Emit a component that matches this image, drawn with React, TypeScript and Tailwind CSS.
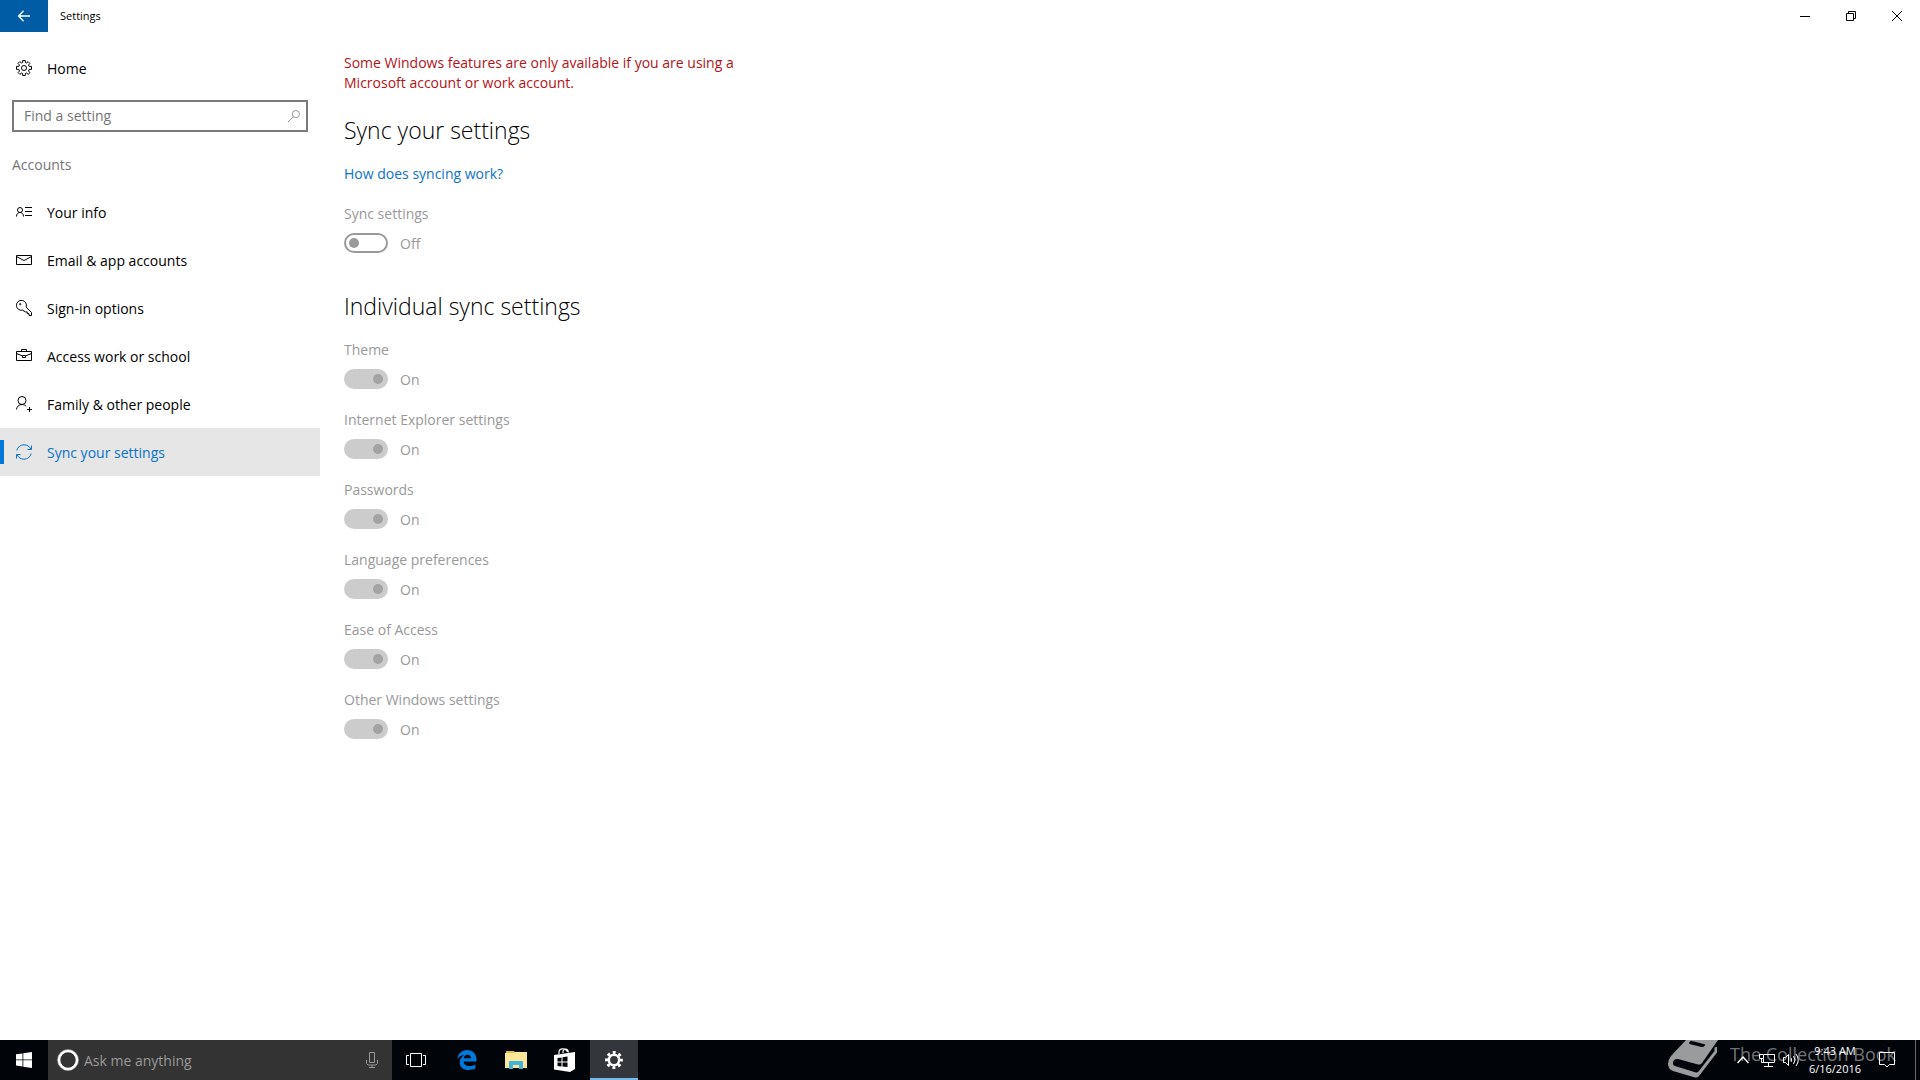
import React, { useState } from "react";

interface NavItem {
    label: string;
    icon: React.ReactNode;
}

interface SyncOption {
    id: string;
    label: string;
    checked: boolean;
}

interface IconProps {
    children: React.ReactNode;
    className?: string;
}

const Icon: React.FC<IconProps> = ({ children, className = "size-4" }) => (
    <svg
        viewBox="0 0 16 16"
        fill="none"
        stroke="currentColor"
        strokeWidth="1"
        className={`${className} shrink-0`}
        aria-hidden="true"
    >
        {children}
    </svg>
);

// outline gear with eight teeth
const GearOutline = () => (
    <Icon>
        <path d="M6.700.5h2.600v2l1.300.5 1.500-1.400 1.800 1.800L12.500 5l.6 1.400h2.400v3h-2.400L12.500 11l1.500 1.600-1.800 1.800-1.600-1.400-1.300.5v2H6.700v-2L5.400 13l-1.500 1.400-1.800-1.800L3.500 11l-.6-1.600H.5v-3h2.400L3.500 5 2 3.400l1.800-1.800L5.400 3l1.300-.5z" />
        <circle cx="8" cy="8" r="2.500" />
    </Icon>
);

const navItems: NavItem[] = [
    {
        label: "Your info",
        icon: (
            <Icon>
                <circle cx="4" cy="6" r="2.500" />
                <path d="M.5 12.500c0-2.500 1.500-4 3.500-4s3.500 1.500 3.500 4M9 3.500h7M9 7.500h7M9 11.500h7" />
            </Icon>
        ),
    },
    {
        label: "Email & app accounts",
        icon: (
            <Icon>
                <path d="M.5 3.500h15v9H.5zM.5 4.500 8 8.500l7.500-4" />
            </Icon>
        ),
    },
    {
        label: "Sign-in options",
        icon: (
            <Icon>
                <path d="M6.500 10.200a5 5 0 1 1 3.600-3.100l5.400 5.400v3h-2.500v-1.800h-1.800v-1.800H9.500z" />
                <circle cx="4.200" cy="4.200" r=".7" />
            </Icon>
        ),
    },
    {
        label: "Access work or school",
        icon: (
            <Icon>
                <path d="M.5 3.500h15v9H.5zM5.500 3.500v-2h5v2M.5 5.500l6 2.500M9.500 8l6-2.500M6.500 7.500h3v2h-3z" />
            </Icon>
        ),
    },
    {
        label: "Family & other people",
        icon: (
            <Icon>
                <circle cx="6" cy="4.500" r="4" />
                <path d="M.5 13.500C.8 10.500 3 8.500 6 8.500c1.800 0 3.200.7 4.200 1.900M13.500 11v5M11 13.500h5" />
            </Icon>
        ),
    },
    {
        label: "Sync your settings",
        icon: (
            <Icon>
                <path d="M.8 6.500C1.600 3 4.500.8 8 .8c3 0 5.600 1.600 6.800 4.200M15.500 1.500V5.500h-4M15.200 9.500c-.8 3.500-3.700 5.700-7.200 5.700-3 0-5.600-1.600-6.800-4.200M.5 14.500v-4h4" />
            </Icon>
        ),
    },
];

const initialOptions: SyncOption[] = [
    { id: "theme", label: "Theme", checked: true },
    { id: "ie", label: "Internet Explorer settings", checked: true },
    { id: "passwords", label: "Passwords", checked: true },
    { id: "language", label: "Language preferences", checked: true },
    { id: "ease", label: "Ease of Access", checked: true },
    { id: "other", label: "Other Windows settings", checked: true },
];

const Toggle: React.FC<{ option: SyncOption }> = ({ option }) => (
    <div className="flex flex-col text-[#999999]">
        <label htmlFor={option.id} className="leading-5">
            {option.label}
        </label>
        <div className="mt-[9px] flex h-5 items-center gap-3">
            <input
                id={option.id}
                type="checkbox"
                role="switch"
                disabled
                checked={option.checked}
                readOnly
                className="flex h-5 w-11 appearance-none items-center rounded-full border-2 border-[#999999] px-[3px] before:size-[10px] before:rounded-full before:bg-[#999999] checked:justify-end checked:border-[#cccccc] checked:bg-[#cccccc] checked:before:bg-[#a3a3a3]"
            />
            <span>{option.checked ? "On" : "Off"}</span>
        </div>
    </div>
);

const TitleBar = () => (
    <header className="flex h-8 shrink-0 items-stretch">
        <button type="button" aria-label="Back" className="flex w-12 items-center justify-center bg-[#005ca5] text-white">
            <svg viewBox="0 0 12 12" fill="none" stroke="currentColor" className="size-3" aria-hidden="true">
                <path strokeWidth="1.300" d="M0 6h12M5.500.7.700 6l4.800 5.300" />
            </svg>
        </button>
        <h1 className="flex flex-1 items-center pl-3 text-[11px]">Settings</h1>
        <button type="button" aria-label="Minimize" className="flex w-[46px] items-center justify-center">
            <svg viewBox="0 0 10 10" stroke="currentColor" className="size-[10px]" aria-hidden="true">
                <path d="M0 5.500h10" />
            </svg>
        </button>
        <button type="button" aria-label="Restore" className="flex w-[46px] items-center justify-center">
            <svg viewBox="0 0 10 10" fill="none" stroke="currentColor" className="size-[10px]" aria-hidden="true">
                <path d="M.5 2.500h7v7h-7zM2.500 2.500v-2h7v7h-2" />
            </svg>
        </button>
        <button type="button" aria-label="Close" className="flex w-[46px] items-center justify-center">
            <svg viewBox="0 0 10 10" stroke="currentColor" className="size-[10px]" aria-hidden="true">
                <path d="M0 0l10 10M10 0 0 10" />
            </svg>
        </button>
    </header>
);

const Sidebar: React.FC<{ active: string; onSelect: (label: string) => void }> = ({ active, onSelect }) => (
    <aside className="w-80 shrink-0 pt-3">
        <a href="#home" className="flex h-12 items-center gap-[15px] pl-4">
            <GearOutline />
            Home
        </a>
        <div className="mx-3 mt-2 flex h-8 items-center border-2 border-[#7a7a7a] pr-[6px] pb-px pl-[10px]">
            <input
                type="text"
                aria-label="Find a setting"
                placeholder="Find a setting"
                className="min-w-0 flex-1 leading-5 outline-none placeholder:text-[#767676]"
            />
            <Icon className="size-3 text-[#767676]">
                <circle cx="10.500" cy="5.500" r="4.800" />
                <path d="M7 9 0 16" />
            </Icon>
        </div>
        <h2 className="mt-[23px] pl-3 leading-5 text-[#767676]">Accounts</h2>
        <nav className="mt-[13px]">
            {navItems.map((item) => (
                <a
                    key={item.label}
                    href="#settings"
                    onClick={() => onSelect(item.label)}
                    className={
                        item.label === active
                            ? "flex h-12 items-center bg-[#e6e6e6] text-[#0b73c9]"
                            : "flex h-12 items-center"
                    }
                >
                    <span className={item.label === active ? "h-6 w-1 bg-[#0078d7]" : "h-6 w-1"} />
                    <span className="flex items-center gap-[15px] pl-3">
                        {item.icon}
                        {item.label}
                    </span>
                </a>
            ))}
        </nav>
    </aside>
);

const Taskbar = () => (
    <footer className="relative flex h-10 shrink-0 items-stretch overflow-hidden bg-[#010409] text-white">
        <button type="button" aria-label="Start" className="flex w-12 items-center justify-center">
            <svg viewBox="0 0 16 16" fill="currentColor" className="size-4" aria-hidden="true">
                <path d="M0 2.300 6.500 1.400v6.100H0zM7.300 1.300 16 0v7.500H7.300zM0 8.300h6.500v6.200L0 13.600zM7.300 8.300H16V16l-8.700-1.300z" />
            </svg>
        </button>
        <div className="flex w-[344px] items-center bg-[#333333] pr-[14px] pl-[9px]">
            <svg viewBox="0 0 22 22" fill="none" stroke="currentColor" className="size-[22px]" aria-hidden="true">
                <circle cx="11" cy="11" r="9" strokeWidth="2.600" />
                <circle cx="11" cy="11" r="10.500" strokeOpacity=".4" />
            </svg>
            <input
                type="text"
                aria-label="Ask me anything"
                placeholder="Ask me anything"
                className="ml-[5px] min-w-0 flex-1 outline-none placeholder:text-[#999999]"
            />
            <svg viewBox="0 0 12 16" fill="none" stroke="#999999" className="h-4 w-3" aria-hidden="true">
                <path d="M3.500.5h5v10h-5zM.5 8v3.500l1.500 1.500h8l1.500-1.500V8M6 13v2.500M3 15.500h6" />
            </svg>
        </div>
        <button type="button" aria-label="Task view" className="flex w-12 items-center justify-center">
            <svg viewBox="0 0 20 14" fill="none" stroke="currentColor" className="h-[14px] w-5" aria-hidden="true">
                <path d="M4.500.5h11v13h-11zM3 2.500H.5v9H3M17 2.500h2.500v9H17" />
            </svg>
        </button>
        <button type="button" aria-label="Microsoft Edge" className="flex w-[54px] items-center justify-center">
            <svg viewBox="0 0 20 20" fill="#0078d7" className="size-5" aria-hidden="true">
                <path d="M.3 8.900C1 3.600 4.700 0 10 0c6 0 9.500 4 9.500 9.300v2.200H6.600c.2 3 2.600 4.500 5.800 4.500 2.200 0 4.200-.6 6-1.600v4.200c-2 1-4.300 1.400-6.700 1.400C6.300 20 2.700 17 2.700 12.400c0-3.200 1.800-5.900 4.600-7.200C4.500 5 1.900 6.400.3 8.900zM6.700 8.200h7.300c0-2.200-1.200-3.500-3.500-3.500-2 0-3.400 1.400-3.800 3.500z" />
            </svg>
        </button>
        <button type="button" aria-label="File Explorer" className="flex w-11 items-center justify-center">
            <svg viewBox="0 0 22 18" className="h-[18px] w-[22px]" aria-hidden="true">
                <path fill="#e8b93c" d="M1 0h8l2 2H1z" />
                <path fill="#fbe69a" d="M0 2h9l1-1h12v16H0z" />
                <path fill="#43b4d9" d="M4 18v-7q0-1 1-1h12q1 0 1 1v7h-4v-4H8v4z" />
            </svg>
        </button>
        <button type="button" aria-label="Store" className="flex w-[52px] items-center justify-center pl-[2px]">
            <svg viewBox="0 0 22 24" className="h-6 w-[22px]" aria-hidden="true">
                <path fill="none" stroke="#ffffff" strokeWidth="1.200" d="M5 6V4c0-4 7-4.500 8.500 0M9 5V3c2-3.500 5-2 5.500 1.500" />
                <path fill="#ffffff" d="M0 7 21 4v17l-5 3-16-2.500z" />
                <path fill="#010409" d="M3.500 10 7.500 9.400v4H3.500zM8.500 9.200l5-.8v5h-5zM3.500 14.400h4v4l-4-.5zM8.500 14.400h5V19l-5-.5z" />
            </svg>
        </button>
        <button
            type="button"
            aria-label="Settings"
            className="flex w-12 items-center justify-center border-b-2 border-[#76b9ed] bg-[#33363b] pt-[2px]"
        >
            <svg viewBox="0 0 18 18" fill="none" stroke="currentColor" className="size-[18px]" aria-hidden="true">
                <circle cx="9" cy="9" r="5.200" strokeWidth="2.600" />
                <circle cx="9" cy="9" r="7.400" strokeWidth="3" strokeDasharray="2.900 2.910" strokeDashoffset="1.450" />
            </svg>
        </button>
        <div className="relative z-10 flex flex-1 items-center justify-end">
            <button type="button" aria-label="Show hidden icons" className="mr-[10px]">
                <svg viewBox="0 0 12 8" fill="none" stroke="currentColor" className="h-2 w-3" aria-hidden="true">
                    <path strokeWidth="1.400" d="M.5 7 6 1l5.500 6" />
                </svg>
            </button>
            <button type="button" aria-label="Network" className="mr-2">
                <svg viewBox="0 0 16 14" fill="none" stroke="currentColor" className="h-[14px] w-4" aria-hidden="true">
                    <path d="M5 1.500h10.500v8h-11V6M.5 1.500h4v4h-4zM2.500 5.500v4h2M9.500 9.500v3.500M5 13.500h9" />
                </svg>
            </button>
            <button type="button" aria-label="Volume">
                <svg viewBox="0 0 16 14" fill="none" stroke="currentColor" className="h-[14px] w-4" aria-hidden="true">
                    <path d="M.5 4.500h2l3-3v11l-3-3h-2zM8 5q1.500 2 0 4M10.500 3q3 4 0 8M13 1q4.500 6 0 12" />
                </svg>
            </button>
            <div className="flex w-[68px] flex-col items-center pl-1 text-[11px] leading-[18px]">
                <span>9:43 AM</span>
                <span>6/16/2016</span>
            </div>
            <button type="button" aria-label="Action center" className="mr-5 ml-3">
                <svg viewBox="0 0 16 16" fill="none" stroke="currentColor" className="size-4" aria-hidden="true">
                    <path d="M.5.500h15v12h-5L8 15l-2.500-2.500h-5z" />
                </svg>
            </button>
            <button type="button" aria-label="Show desktop" className="h-10 w-[5px] border-l border-[#6a6c70]" />
        </div>
        <div className="pointer-events-none absolute right-6 bottom-0 flex h-10 items-start">
            <svg viewBox="0 0 52 40" fill="#999b9d" className="h-10 w-[52px]" aria-hidden="true">
                <path d="M20 0h32L36 23q-1.500 2-4 1.400L12 19q-4-.5-5 3-.5 3 2 4l21 6.500q1.500.3 2.500-1L48.500 11V7.500L51 7v5.500L33 36q-1.500 2-4 1.500L7 31q-5-2-5-7 0-4 3-8z" />
                <path fill="#010409" d="M24 1.500q.5-1 2-.5l13.500 3.500q-1.500 3-4 2.500L23.500 4q-1-.8.5-2.500z" />
            </svg>
            <span className="ml-3 text-lg leading-7 text-white/45">The Collection Book</span>
        </div>
    </footer>
);

const App: React.FC = () => {
    const [active, setActive] = useState<string>("Sync your settings");

    return (
        <div className="flex min-h-screen flex-col bg-white font-['Open_Sans','Noto_Sans',sans-serif] text-[14px] text-black">
            <TitleBar />
            <div className="flex flex-1">
                <Sidebar active={active} onSelect={setActive} />
                <main className="flex-1 px-6 pt-[21px]">
                    <p className="max-w-[410px] leading-5 text-[#b31217]">
                        Some Windows features are only available if you are using a Microsoft account or work account.
                    </p>
                    <h2 className="mt-[21px] text-[23px] leading-8 font-light">Sync your settings</h2>
                    <a href="#help" className="mt-[18px] block leading-5 text-[#0b73c9]">
                        How does syncing work?
                    </a>
                    <div className="mt-5">
                        <Toggle option={{ id: "sync", label: "Sync settings", checked: false }} />
                    </div>
                    <h2 className="mt-[37px] text-[23px] leading-8 font-light">Individual sync settings</h2>
                    <div className="mt-[18px] flex flex-col gap-[21px]">
                        {initialOptions.map((option) => (
                            <Toggle key={option.id} option={option} />
                        ))}
                    </div>
                </main>
            </div>
            <Taskbar />
        </div>
    );
};

export default App;
